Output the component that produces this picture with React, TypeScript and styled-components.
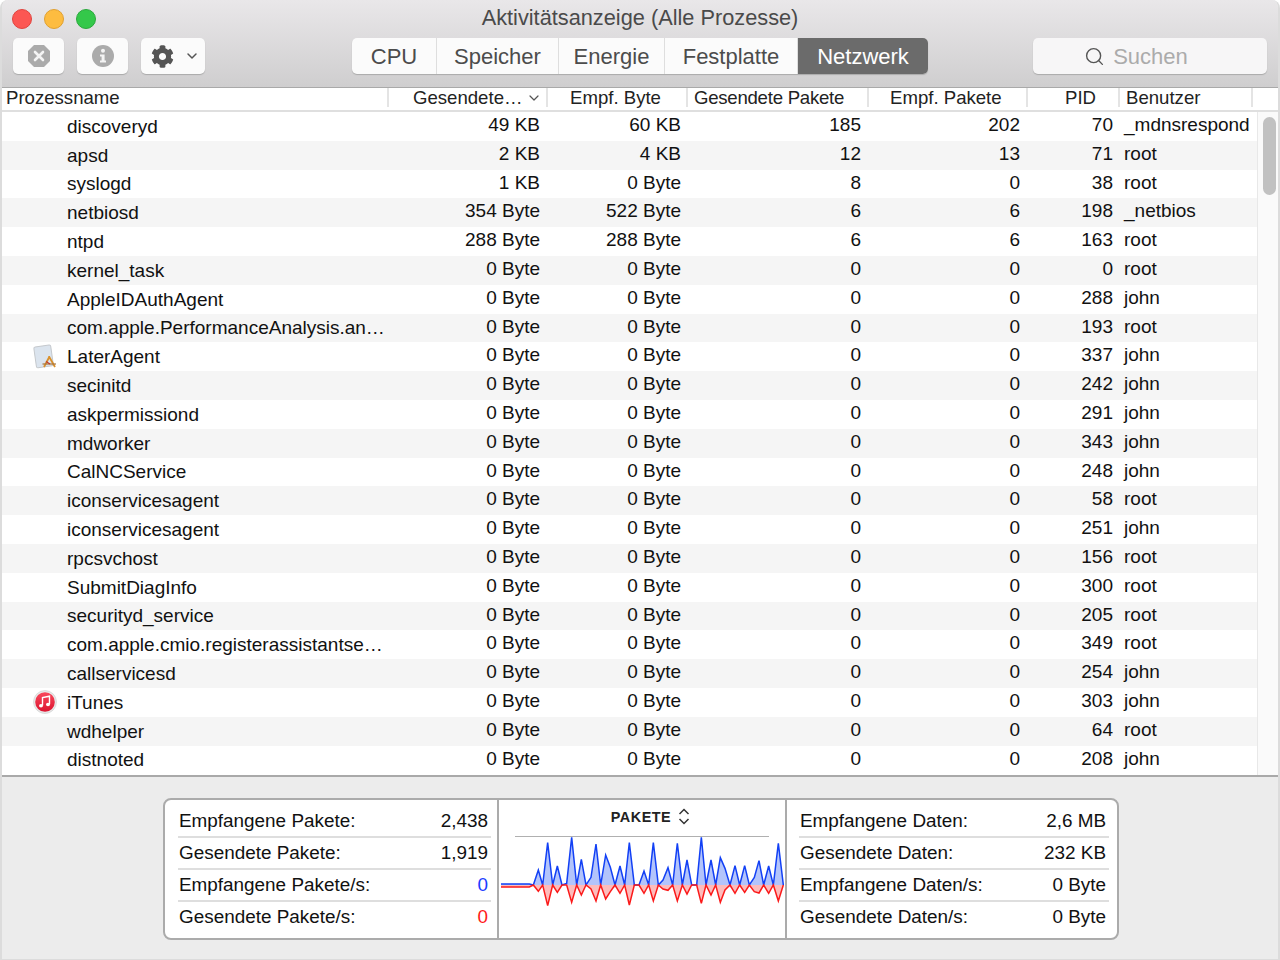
import React from 'react';
import styled, { createGlobalStyle } from 'styled-components';
import { ChevronDown, Search } from 'lucide-react';
import { FaCog } from 'react-icons/fa';

const GlobalStyle = createGlobalStyle`
    html, body {
        margin: 0;
        padding: 0;
        background: #fff;
    }
    body {
        font-family: "Liberation Sans", Arial, sans-serif;
        color: #111;
    }
`;

const Window = styled.div`
    width: 1280px;
    height: 960px;
    box-sizing: border-box;
    border: solid #dcdcdc;
    border-width: 0 2px 1px 2px;
    border-radius: 8px 8px 0 0;
    overflow: hidden;
    display: flex;
    flex-direction: column;
    background: #ececec;
`;

const Toolbar = styled.div`
    height: 88px;
    box-sizing: border-box;
    flex: none;
    background: linear-gradient(#e9e7e9, #cfcecf);
    border-bottom: 1px solid #a9a9a9;
    display: flex;
    flex-direction: column;
`;

const TitleRow = styled.div`
    height: 38px;
    flex: none;
    display: flex;
    align-items: center;
    padding-left: 10px;
    gap: 12px;
    position: relative;
`;

const Light = styled.span<{ $bg: string; $edge: string }>`
    width: 20px;
    height: 20px;
    box-sizing: border-box;
    border-radius: 50%;
    background: ${props => props.$bg};
    border: 1px solid ${props => props.$edge};
`;

const Title = styled.div`
    position: absolute;
    left: 0;
    right: 0;
    top: 5px;
    text-align: center;
    font-size: 21.75px;
    line-height: 26px;
    color: #4a4a4a;
`;

const Controls = styled.div`
    display: flex;
    height: 36px;
    padding-left: 11px;
`;

const ToolButton = styled.div<{ $width: number; $gap: number }>`
    width: ${props => props.$width}px;
    margin-right: ${props => props.$gap}px;
    height: 36px;
    border-radius: 5px;
    background: #fbfbfb;
    box-shadow: 0 1px 1px #aaa;
    display: flex;
    align-items: center;
    justify-content: center;
    color: #555;
`;

const MenuButton = styled(ToolButton)`
    gap: 10px;
    padding-left: 5px;
    box-sizing: border-box;
`;

const Tabs = styled.div`
    width: 576px;
    height: 36px;
    margin-right: 105px;
    display: flex;
    border-radius: 5px;
    overflow: hidden;
    box-shadow: 0 1px 1px #aaa;
    background: #fbfbfb;
`;

const Tab = styled.div<{ $width: number; $active?: boolean }>`
    width: ${props => props.$width}px;
    box-sizing: border-box;
    text-align: center;
    font-size: 22px;
    line-height: 37px;
    color: ${props => (props.$active ? '#fff' : '#4c4c4c')};
    background: ${props => (props.$active ? '#6b6b6b' : 'transparent')};
    border-right: ${props => (props.$active ? '0' : '1px solid #dedede')};
`;

const SearchBox = styled.div`
    width: 234px;
    height: 36px;
    box-sizing: border-box;
    padding: 1px 28px 0 0;
    border-radius: 5px;
    background: #f7f6f7;
    box-shadow: 0 1px 1px #aaa;
    display: flex;
    align-items: center;
    justify-content: center;
    gap: 8px;
    font-size: 22px;
    color: #ababab;
    svg {
        color: #555;
    }
`;

const HeaderRow = styled.div`
    display: grid;
    grid-template-columns: 387px 159px 140px 181px 159px 92px 133px 1fr;
    height: 24px;
    flex: none;
    box-sizing: border-box;
    background: #fff;
    border-bottom: 2px solid #dfdfdf;
    font-size: 18.6px;
    line-height: 20px;
    color: #222;
`;

const HeaderCell = styled.div<{ $left: number; $tight?: boolean }>`
    display: flex;
    align-items: center;
    box-sizing: border-box;
    height: 19px;
    padding-left: ${props => props.$left}px;
    border-right: 2px solid #e4e4e4;
    white-space: nowrap;
    letter-spacing: ${props => (props.$tight ? '-0.25px' : '0')};
    svg {
        color: #555;
        margin-left: 3px;
    }
`;

const TableArea = styled.div`
    height: 663px;
    flex: none;
    display: flex;
    background: #fff;
    border-bottom: 2px solid #a9a9a9;
    box-sizing: content-box;
`;

const RowList = styled.div`
    width: 1255px;
    overflow: hidden;
    flex: none;
`;

const Row = styled.div<{ $odd: boolean }>`
    display: grid;
    grid-template-columns: 386px 159px 141px 180px 159px 93px 137px;
    height: 28.8px;
    background: ${props => (props.$odd ? '#f5f5f5' : '#fff')};
    font-size: 19px;
    line-height: 25px;
    color: #111;
`;

const NameCell = styled.div`
    display: flex;
    align-items: center;
    height: 28.8px;
    box-sizing: border-box;
    white-space: nowrap;
`;

const IconSlot = styled.span`
    width: 65px;
    height: 26px;
    flex: none;
    display: flex;
    align-items: center;
    justify-content: flex-end;
    padding-right: 10px;
    box-sizing: border-box;
`;

const ValueCell = styled.div`
    text-align: right;
    padding-right: 7px;
`;

const UserCell = styled.div`
    padding-left: 4px;
    white-space: nowrap;
`;

const ScrollTrack = styled.div`
    flex: 1;
    border-left: 1px solid #e8e8e8;
    background: #fafafa;
    padding: 5px 0 0 5px;
`;

const ScrollThumb = styled.div`
    width: 13px;
    height: 78px;
    border-radius: 7px;
    background: #c1c1c1;
`;

const Footer = styled.div`
    flex: 1;
    padding-top: 21px;
    padding-left: 161px;
`;

const StatsPanel = styled.div`
    width: 956px;
    height: 142px;
    box-sizing: border-box;
    display: grid;
    grid-template-columns: 332px 290px 1fr;
    background: #fff;
    border: 2px solid #ababab;
    border-radius: 8px;
`;

const StatsList = styled.div<{ $left: number; $right: number }>`
    padding: 6px ${props => props.$right}px 0 ${props => props.$left}px;
`;

const StatRow = styled.div`
    height: 32px;
    box-sizing: border-box;
    display: flex;
    justify-content: space-between;
    padding: 0 3px 0 1px;
    font-size: 18.9px;
    line-height: 30px;
    border-bottom: 2px solid #dedede;
    &:last-child {
        border-bottom: 0;
    }
`;

const StatValue = styled.span<{ $color?: string }>`
    color: ${props => props.$color || '#111'};
`;

const ChartCell = styled.div`
    border: solid #ababab;
    border-width: 0 2px;
    display: flex;
    flex-direction: column;
`;

const ChartHead = styled.div`
    height: 37px;
    flex: none;
    margin: 0 16px;
    border-bottom: 1px solid #b0b0b0;
    display: flex;
    align-items: center;
    justify-content: center;
    gap: 7px;
    padding-bottom: 3px;
    box-sizing: border-box;
    padding-left: 17px;
    font-size: 14.4px;
    font-weight: bold;
    letter-spacing: 0.5px;
    color: #222;
`;

const ChartSvg = styled.svg`
    display: block;
    width: 286px;
    height: 100px;
    margin-top: -1px;
`;

const rows: [string, string, string, string, string, string, string, string?][] = [
    ['discoveryd', '49 KB', '60 KB', '185', '202', '70', '_mdnsrespond'],
    ['apsd', '2 KB', '4 KB', '12', '13', '71', 'root'],
    ['syslogd', '1 KB', '0 Byte', '8', '0', '38', 'root'],
    ['netbiosd', '354 Byte', '522 Byte', '6', '6', '198', '_netbios'],
    ['ntpd', '288 Byte', '288 Byte', '6', '6', '163', 'root'],
    ['kernel_task', '0 Byte', '0 Byte', '0', '0', '0', 'root'],
    ['AppleIDAuthAgent', '0 Byte', '0 Byte', '0', '0', '288', 'john'],
    ['com.apple.PerformanceAnalysis.an…', '0 Byte', '0 Byte', '0', '0', '193', 'root'],
    ['LaterAgent', '0 Byte', '0 Byte', '0', '0', '337', 'john', 'app'],
    ['secinitd', '0 Byte', '0 Byte', '0', '0', '242', 'john'],
    ['askpermissiond', '0 Byte', '0 Byte', '0', '0', '291', 'john'],
    ['mdworker', '0 Byte', '0 Byte', '0', '0', '343', 'john'],
    ['CalNCService', '0 Byte', '0 Byte', '0', '0', '248', 'john'],
    ['iconservicesagent', '0 Byte', '0 Byte', '0', '0', '58', 'root'],
    ['iconservicesagent', '0 Byte', '0 Byte', '0', '0', '251', 'john'],
    ['rpcsvchost', '0 Byte', '0 Byte', '0', '0', '156', 'root'],
    ['SubmitDiagInfo', '0 Byte', '0 Byte', '0', '0', '300', 'root'],
    ['securityd_service', '0 Byte', '0 Byte', '0', '0', '205', 'root'],
    ['com.apple.cmio.registerassistantse…', '0 Byte', '0 Byte', '0', '0', '349', 'root'],
    ['callservicesd', '0 Byte', '0 Byte', '0', '0', '254', 'john'],
    ['iTunes', '0 Byte', '0 Byte', '0', '0', '303', 'john', 'itunes'],
    ['wdhelper', '0 Byte', '0 Byte', '0', '0', '64', 'root'],
    ['distnoted', '0 Byte', '0 Byte', '0', '0', '208', 'john'],
];

const headers = [
    { label: 'Prozessname', left: 4 },
    { label: 'Gesendete…', left: 24, sort: true },
    { label: 'Empf. Byte', left: 22 },
    { label: 'Gesendete Pakete', left: 6, tight: true },
    { label: 'Empf. Pakete', left: 21 },
    { label: 'PID', left: 37 },
    { label: 'Benutzer', left: 6 },
];

const tabs = [
    { label: 'CPU', width: 85 },
    { label: 'Speicher', width: 122 },
    { label: 'Energie', width: 106 },
    { label: 'Festplatte', width: 133 },
    { label: 'Netzwerk', width: 130, active: true },
];

const leftStats: [string, string, string?][] = [
    ['Empfangene Pakete:', '2,438'],
    ['Gesendete Pakete:', '1,919'],
    ['Empfangene Pakete/s:', '0', '#1a3cff'],
    ['Gesendete Pakete/s:', '0', '#ff1a1a'],
];

const rightStats: [string, string][] = [
    ['Empfangene Daten:', '2,6 MB'],
    ['Gesendete Daten:', '232 KB'],
    ['Empfangene Daten/s:', '0 Byte'],
    ['Gesendete Daten/s:', '0 Byte'],
];

// points read off the reference graph, in 3x units
const sentPeaks = '33,282 118,282 130,285 145,240 158,285 173,158 188,285 202,228 216,285 230,280 245,142 260,285 274,208 288,285 303,262 318,162 332,285 347,195 361,232 375,285 390,228 404,285 418,158 433,285 447,285 462,243 476,285 490,158 505,285 519,270 534,233 548,285 562,160 577,285 591,210 605,285 620,285 634,142 648,285 663,210 677,285 691,203 705,235 720,285 735,227 749,285 764,227 778,285 793,262 807,212 821,285 836,228 850,285 865,160 880,285';
const recvPeaks = '33,291 118,291 130,285 145,304 158,285 173,347 188,285 202,307 216,285 230,285 245,337 260,285 274,315 288,285 303,297 318,333 332,285 347,327 361,305 375,285 390,310 404,285 418,345 433,285 447,285 462,310 476,285 490,333 505,285 519,297 534,301 548,285 562,333 577,285 591,312 605,285 620,285 634,340 648,285 663,315 677,285 691,337 705,300 720,285 735,310 749,285 764,307 778,285 793,305 807,309 821,285 836,310 850,285 865,333 880,285';

const StopIcon = () => (
    <svg width="24" height="24" viewBox="0 0 24 24">
        <polygon points="7,1 17,1 23,7 23,17 17,23 7,23 1,17 1,7" fill="#ababab" />
        <path d="M8 8 L16 16 M16 8 L8 16" stroke="#f4f4f4" strokeWidth="2.6" strokeLinecap="round" />
    </svg>
);

const InfoIcon = () => (
    <svg width="24" height="24" viewBox="0 0 24 24">
        <circle cx="12" cy="12" r="11" fill="#ababab" />
        <circle cx="12" cy="6.8" r="2" fill="#f4f4f4" />
        <path d="M9 10.5 H13.6 V16.6 H15 V18.6 H9 V16.6 H10.6 V12.5 H9 Z" fill="#f4f4f4" />
    </svg>
);

const AppIcon = () => (
    <svg width="24" height="26" viewBox="0 0 24 26">
        <g transform="rotate(-8 10 12)">
            <rect x="2" y="2" width="17" height="21" rx="1.5" fill="#dbe4ee" stroke="#c4c8cc" />
        </g>
        <path d="M11 23 L16.5 12.5 M22 23 L16 12.5" stroke="#d9902c" strokeWidth="1.8" />
        <path d="M9.5 20 H23" stroke="#a8743a" strokeWidth="1.2" />
        <path d="M13 17.5 L17 20" stroke="#c0392b" strokeWidth="1.2" />
    </svg>
);

const ITunesIcon = () => (
    <svg width="24" height="24" viewBox="0 0 24 24">
        <defs>
            <linearGradient id="itunes-fill" x1="0" y1="0" x2="0" y2="1">
                <stop offset="0" stopColor="#f9495c" />
                <stop offset="1" stopColor="#dc1430" />
            </linearGradient>
        </defs>
        <circle cx="12" cy="12" r="11.5" fill="#e8e8e8" stroke="#c8c8c8" strokeWidth="0.5" />
        <circle cx="12" cy="12" r="9.8" fill="url(#itunes-fill)" />
        <path d="M9.5 15.5 V7.6 L16.5 6.2 V14.2" stroke="#fff" strokeWidth="1.4" fill="none" />
        <ellipse cx="8" cy="15.8" rx="2" ry="1.7" fill="#fff" />
        <ellipse cx="15" cy="14.5" rx="2" ry="1.7" fill="#fff" />
    </svg>
);

const UpDownIcon = () => (
    <svg width="12" height="17" viewBox="0 0 12 17" fill="none" stroke="#333" strokeWidth="1.5">
        <path d="M1.5 6 L6 1.5 L10.5 6" />
        <path d="M1.5 11 L6 15.5 L10.5 11" />
    </svg>
);

const App = () => {
    return (
        <>
            <GlobalStyle />
            <Window>
                <Toolbar>
                    <TitleRow>
                        <Title>Aktivitätsanzeige (Alle Prozesse)</Title>
                        <Light $bg="#fc5753" $edge="#e0443e" />
                        <Light $bg="#fdbc40" $edge="#e0a030" />
                        <Light $bg="#34c84a" $edge="#2aa83c" />
                    </TitleRow>
                    <Controls>
                        <ToolButton $width={51} $gap={13}><StopIcon /></ToolButton>
                        <ToolButton $width={51} $gap={13}><InfoIcon /></ToolButton>
                        <MenuButton $width={64} $gap={147}>
                            <FaCog size={23} />
                            <ChevronDown size={16} strokeWidth={2.2} />
                        </MenuButton>
                        <Tabs>
                            {tabs.map(tab => (
                                <Tab key={tab.label} $width={tab.width} $active={tab.active}>{tab.label}</Tab>
                            ))}
                        </Tabs>
                        <SearchBox>
                            <Search size={21} strokeWidth={1.6} />
                            Suchen
                        </SearchBox>
                    </Controls>
                </Toolbar>
                <HeaderRow>
                    {headers.map(col => (
                        <HeaderCell key={col.label} $left={col.left} $tight={col.tight}>
                            {col.label}
                            {col.sort && <ChevronDown size={16} strokeWidth={1.8} />}
                        </HeaderCell>
                    ))}
                </HeaderRow>
                <TableArea>
                    <RowList>
                        {rows.map((row, key) => (
                            <Row key={key} $odd={key % 2 === 1}>
                                <NameCell>
                                    <IconSlot>
                                        {row[7] === 'app' && <AppIcon />}
                                        {row[7] === 'itunes' && <ITunesIcon />}
                                    </IconSlot>
                                    {row[0]}
                                </NameCell>
                                <ValueCell>{row[1]}</ValueCell>
                                <ValueCell>{row[2]}</ValueCell>
                                <ValueCell>{row[3]}</ValueCell>
                                <ValueCell>{row[4]}</ValueCell>
                                <ValueCell>{row[5]}</ValueCell>
                                <UserCell>{row[6]}</UserCell>
                            </Row>
                        ))}
                    </RowList>
                    <ScrollTrack><ScrollThumb /></ScrollTrack>
                </TableArea>
                <Footer>
                    <StatsPanel>
                        <StatsList $left={13} $right={6}>
                            {leftStats.map(stat => (
                                <StatRow key={stat[0]}>
                                    <span>{stat[0]}</span>
                                    <StatValue $color={stat[2]}>{stat[1]}</StatValue>
                                </StatRow>
                            ))}
                        </StatsList>
                        <ChartCell>
                            <ChartHead>PAKETE <UpDownIcon /></ChartHead>
                            <ChartSvg viewBox="27 138 858 300">
                                <polygon points={`33,285 ${sentPeaks}`} fill="#b3c4fb" />
                                <polygon points={`33,285 ${recvPeaks}`} fill="#fdbcbc" />
                                <polyline points={sentPeaks} fill="none" stroke="#1240f5" strokeWidth="4.5" />
                                <polyline points={recvPeaks} fill="none" stroke="#fb1a1a" strokeWidth="4.5" />
                            </ChartSvg>
                        </ChartCell>
                        <StatsList $left={12} $right={8}>
                            {rightStats.map(stat => (
                                <StatRow key={stat[0]}>
                                    <span>{stat[0]}</span>
                                    <StatValue>{stat[1]}</StatValue>
                                </StatRow>
                            ))}
                        </StatsList>
                    </StatsPanel>
                </Footer>
            </Window>
        </>
    );
};

export default App;
